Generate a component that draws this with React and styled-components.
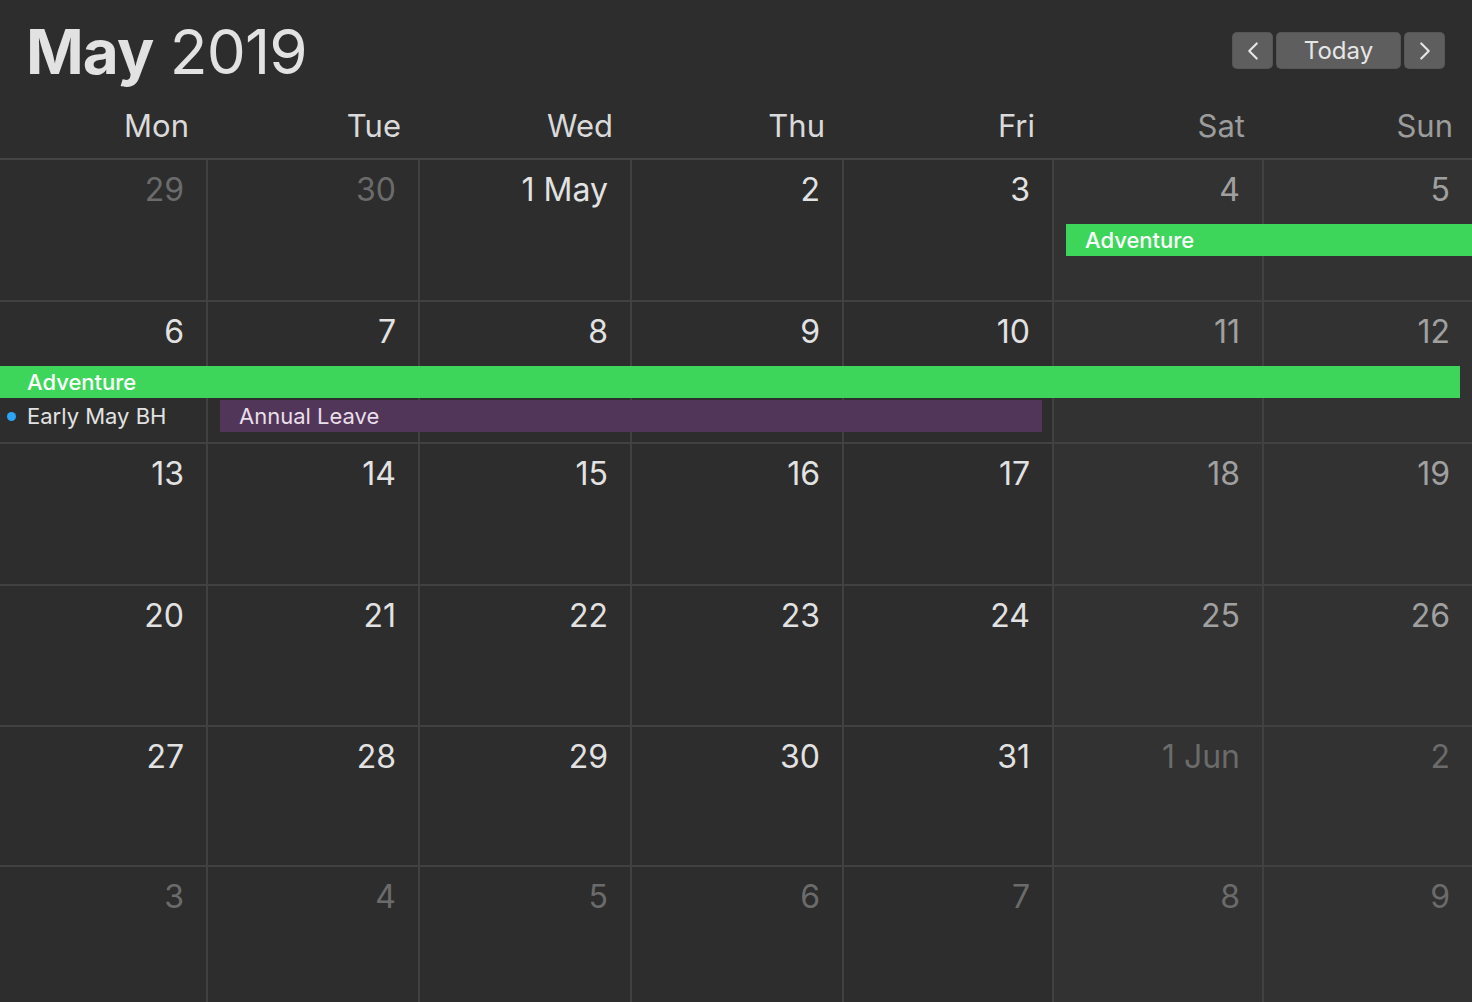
import React from "react";
import styled, { createGlobalStyle } from "styled-components";
import { ChevronLeft, ChevronRight } from "lucide-react";

const Global = createGlobalStyle`
  html, body { margin: 0; padding: 0; background: #2d2d2d; }
  body { font-family: Inter, "Noto Sans", "DejaVu Sans", sans-serif; -webkit-font-smoothing: antialiased; }
  * { box-sizing: border-box; }
`;

const COLS = "208px 212px 212px 212px 210px 210px 1fr";
const LINE = "#414141";

const Page = styled.div`
  width: 1472px;
  height: 1002px;
  overflow: hidden;
  background: #2d2d2d;
  display: flex;
  flex-direction: column;
`;

const Header = styled.header`
  height: 160px;
  flex: none;
  display: flex;
  flex-direction: column;
  border-bottom: 2px solid #454545;
`;

const TitleRow = styled.div`
  display: flex;
  justify-content: space-between;
  align-items: flex-start;
  padding: 14px 27px 0 26px;
  height: 100px;
`;

const Title = styled.h1`
  margin: 0;
  font-size: 62px;
  line-height: 76px;
  font-weight: 400;
  color: #e2e2e2;
  letter-spacing: -0.9px;
  b { font-weight: 700; }
`;

const NavGroup = styled.div`
  display: flex;
  gap: 3px;
  margin-top: 18px;
`;

const NavButton = styled.button`
  height: 37px;
  width: ${(p) => p.$w}px;
  border: none;
  border-radius: 5px;
  background: #5e5e5e;
  box-shadow: inset 0 0 0 1px rgba(0,0,0,0.08);
  color: #e6e6e6;
  font-family: Inter, "Noto Sans", sans-serif;
  font-size: 24px;
  display: flex;
  align-items: center;
  justify-content: center;
  padding: 0;
`;

const DayNames = styled.div`
  display: grid;
  grid-template-columns: ${COLS};
  align-items: end;
  flex: 1;
  padding-bottom: 14px;
`;

const DayName = styled.div`
  text-align: right;
  padding-right: 19px;
  font-size: 31px;
  line-height: 36px;
  color: ${(p) => (p.$weekend ? "#9c9c9c" : "#dadada")};
`;

const Weeks = styled.div`
  display: flex;
  flex-direction: column;
  flex: 1;
  min-height: 0;
  overflow: hidden;
`;

const Week = styled.div`
  display: grid;
  grid-template-columns: ${COLS};
  grid-template-rows: 64px 32px 2px 32px 1fr;
  height: ${(p) => p.$h}px;
  flex: none;
  border-bottom: 2px solid ${LINE};
`;

const Cell = styled.div`
  grid-row: 1 / -1;
  grid-column: ${(p) => p.$col};
  background: ${(p) => (p.$weekend ? "#323232" : "#2d2d2d")};
  border-right: ${(p) => (p.$last ? "none" : `2px solid ${LINE}`)};
  text-align: right;
  padding: 14px 22px 0 0;
`;

const DateLabel = styled.span`
  font-size: 32px;
  line-height: 32px;
  color: ${(p) => p.$color};
`;

const EventBar = styled.div`
  grid-row: ${(p) => p.$row};
  grid-column: ${(p) => p.$start} / ${(p) => p.$end};
  margin-left: ${(p) => p.$ml}px;
  margin-right: ${(p) => p.$mr}px;
  padding-left: ${(p) => p.$pl}px;
  background: ${(p) => p.$bg};
  color: ${(p) => p.$fg};
  font-size: 22px;
  font-weight: ${(p) => p.$weight};
  line-height: 32px;
  white-space: nowrap;
  overflow: hidden;
`;

const DotEvent = styled.div`
  grid-row: ${(p) => p.$row};
  grid-column: ${(p) => p.$col};
  display: flex;
  align-items: center;
  gap: 11px;
  padding-left: 7px;
  font-size: 22px;
  line-height: 32px;
  color: #e2e2e2;
  white-space: nowrap;
`;

const Dot = styled.span`
  width: 9px;
  height: 9px;
  border-radius: 50%;
  background: ${(p) => p.$color};
  flex: none;
`;

const dayNames = ["Mon", "Tue", "Wed", "Thu", "Fri", "Sat", "Sun"];

const weeks = [
  { h: 142, days: [["29", 1], ["30", 1], ["1 May"], ["2"], ["3"], ["4"], ["5"]] },
  { h: 142, days: [["6"], ["7"], ["8"], ["9"], ["10"], ["11"], ["12"]] },
  { h: 142, days: [["13"], ["14"], ["15"], ["16"], ["17"], ["18"], ["19"]] },
  { h: 141, days: [["20"], ["21"], ["22"], ["23"], ["24"], ["25"], ["26"]] },
  { h: 140, days: [["27"], ["28"], ["29"], ["30"], ["31"], ["1 Jun", 1], ["2", 1]] },
  { h: 140, days: [["3", 1], ["4", 1], ["5", 1], ["6", 1], ["7", 1], ["8", 1], ["9", 1]] },
];

const GREEN = "#3dd65a";
const PURPLE = "#523659";

const events = {
  0: [
    { type: "bar", row: 2, start: 6, end: 8, ml: 12, mr: 0, pl: 19, bg: GREEN, fg: "#ffffff", weight: 500, title: "Adventure" },
  ],
  1: [
    { type: "bar", row: 2, start: 1, end: 8, ml: 0, mr: 12, pl: 27, bg: GREEN, fg: "#ffffff", weight: 500, title: "Adventure" },
    { type: "dot", row: 4, col: 1, color: "#2ba6f5", title: "Early May BH" },
    { type: "bar", row: 4, start: 2, end: 6, ml: 12, mr: 12, pl: 19, bg: PURPLE, fg: "#e8dfe9", weight: 400, title: "Annual Leave" },
  ],
};

function dateColor(muted, weekend) {
  if (muted) return "#6b6b6b";
  return weekend ? "#a0a0a0" : "#e2e2e2";
}

export default function App() {
  return (
    <Page>
      <Global />
      <Header>
        <TitleRow>
          <Title>
            <b>May</b> 2019
          </Title>
          <NavGroup>
            <NavButton $w={41} aria-label="Previous">
              <ChevronLeft size={30} strokeWidth={1.7} />
            </NavButton>
            <NavButton $w={125}>Today</NavButton>
            <NavButton $w={41} aria-label="Next">
              <ChevronRight size={30} strokeWidth={1.7} />
            </NavButton>
          </NavGroup>
        </TitleRow>
        <DayNames>
          {dayNames.map((d, i) => (
            <DayName key={d} $weekend={i >= 5}>
              {d}
            </DayName>
          ))}
        </DayNames>
      </Header>
      <Weeks>
        {weeks.map((w, wi) => (
          <Week key={wi} $h={w.h}>
            {w.days.map(([label, muted], di) => (
              <Cell key={di} $col={di + 1} $weekend={di >= 5} $last={di === 6}>
                <DateLabel $color={dateColor(muted, di >= 5)}>{label}</DateLabel>
              </Cell>
            ))}
            {(events[wi] || []).map((e, ei) =>
              e.type === "bar" ? (
                <EventBar
                  key={ei}
                  $row={e.row}
                  $start={e.start}
                  $end={e.end}
                  $ml={e.ml}
                  $mr={e.mr}
                  $pl={e.pl}
                  $bg={e.bg}
                  $fg={e.fg}
                  $weight={e.weight}
                >
                  {e.title}
                </EventBar>
              ) : (
                <DotEvent key={ei} $row={e.row} $col={e.col}>
                  <Dot $color={e.color} />
                  {e.title}
                </DotEvent>
              )
            )}
          </Week>
        ))}
      </Weeks>
    </Page>
  );
}
